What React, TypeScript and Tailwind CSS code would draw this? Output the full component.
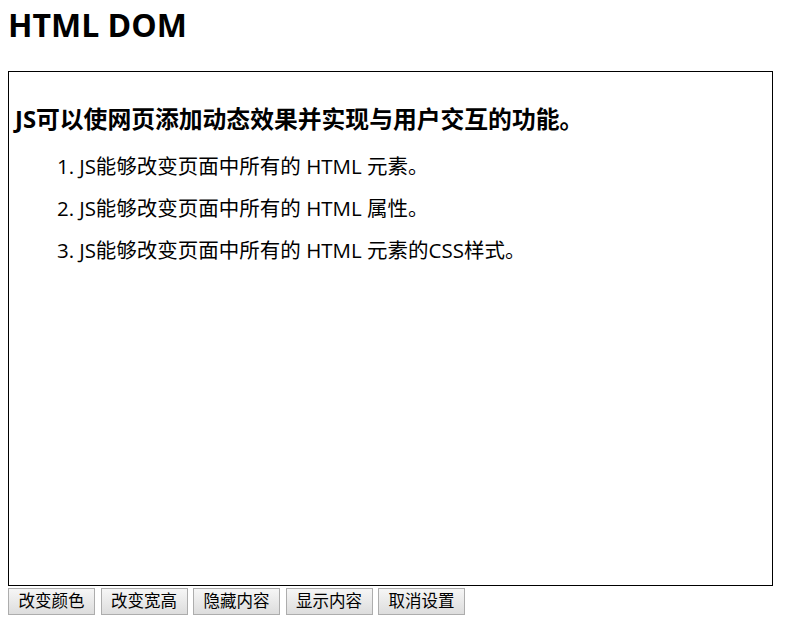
const items = [
  'JS能够改变页面中所有的 HTML 元素。',
  'JS能够改变页面中所有的 HTML 属性。',
  'JS能够改变页面中所有的 HTML 元素的CSS样式。',
];

const buttons = ['改变颜色', '改变宽高', '隐藏内容', '显示内容', '取消设置'];

export default function App() {
  return (
    <div className="min-h-[633px] bg-white px-2 pt-[3px] text-black font-['Open_Sans','Noto_Sans_CJK_SC',sans-serif]">
      <h1 className="text-[32px] font-bold leading-[44px] mb-[24px]">HTML DOM</h1>
      <div className="w-[765px] h-[515px] border border-black px-[6px] pt-[32px]">
        <h3 className="text-[23.8px] font-bold leading-[30px]">JS可以使网页添加动态效果并实现与用户交互的功能。</h3>
        <ol className="mt-[18px] pl-[42px] text-[20.5px] leading-[28px] flex flex-col gap-[14px]">
          {items.map((t, i) => (
            <li key={i} className="flex">
              <span className="mr-[5px]">{i + 1}.</span>
              <span>{t}</span>
            </li>
          ))}
        </ol>
      </div>
      <div className="flex gap-[5.5px] mt-[2px]">
        {buttons.map((b) => (
          <button
            key={b}
            className="w-[87px] h-[27px] text-[16.5px] leading-none border border-[#adadad] bg-gradient-to-b from-[#f6f6f6] to-[#dddddd] text-black"
          >
            {b}
          </button>
        ))}
      </div>
    </div>
  );
}
